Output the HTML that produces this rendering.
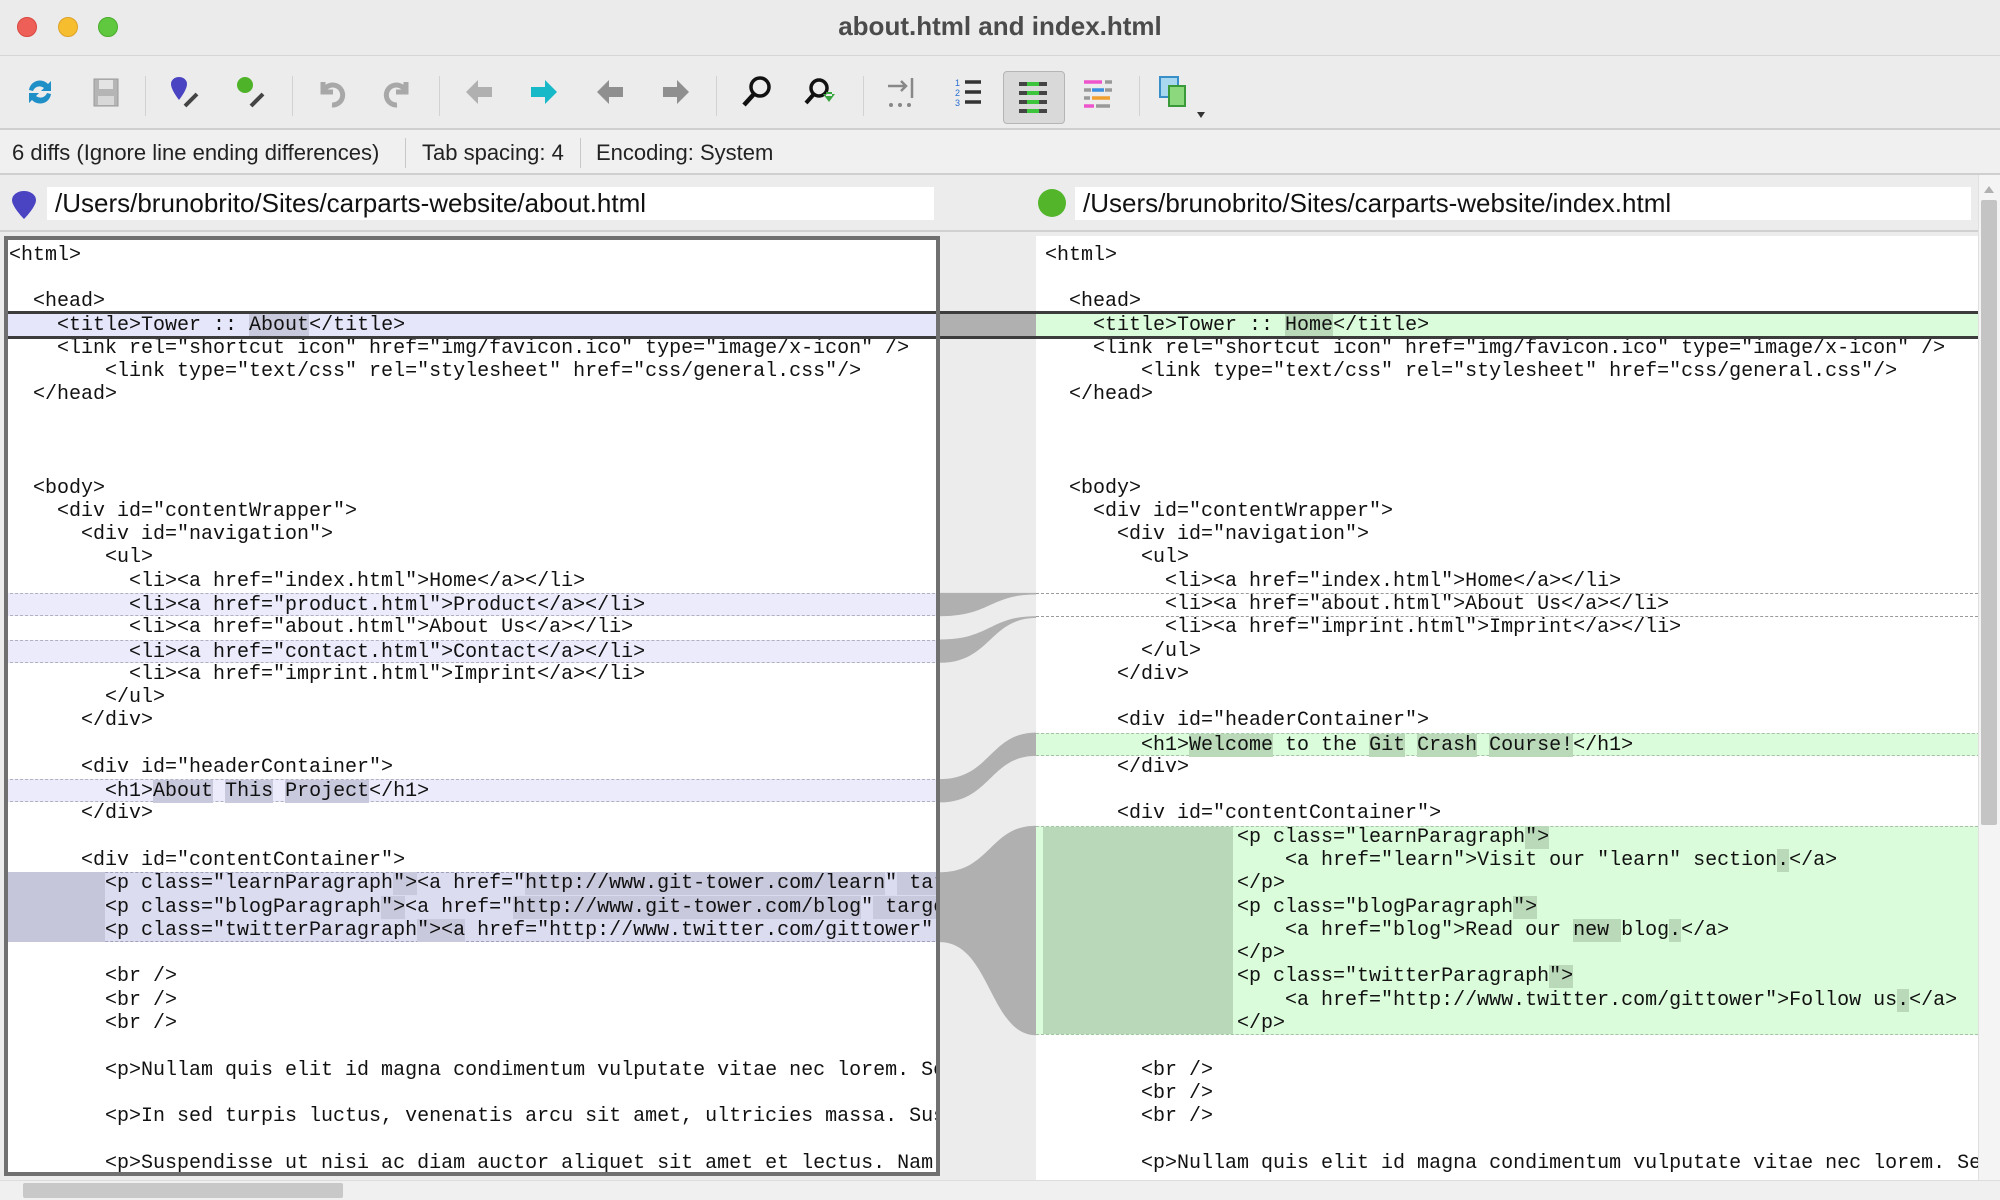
<!DOCTYPE html>
<html><head><meta charset="utf-8">
<style>
*{margin:0;padding:0;box-sizing:border-box}
body{width:2000px;height:1200px;background:#ececec;position:relative;overflow:hidden;font-family:"Liberation Sans",sans-serif}
.abs{position:absolute}
#title{left:0;top:0;width:2000px;height:56px;background:#ebebeb;border-bottom:1px solid #d6d6d6}
.tl{position:absolute;top:17px;width:20px;height:20px;border-radius:50%}
#ttext{position:absolute;left:0;width:2000px;top:11px;text-align:center;font-size:26px;font-weight:bold;color:#4b4b4b}
#toolbar{left:0;top:56px;width:2000px;height:74px;background:#ececec;border-bottom:2px solid #cfcfcf}
.sep{position:absolute;top:20px;width:1px;height:40px;background:#d2d2d2}
.ic{position:absolute;top:16px;width:40px;height:40px}
#status{left:0;top:130px;width:2000px;height:45px;background:#f0f0f0;border-bottom:2px solid #cfcfcf;font-size:22px;color:#222}
#status span{position:absolute;top:10px}
.vs{position:absolute;top:8px;width:1px;height:30px;background:#c8c8c8}
#pathbar{left:0;top:175px;width:1978px;height:57px;background:#ececec;border-bottom:2px solid #d0d0d0}
.field{position:absolute;top:12px;height:33px;background:#fff;font-size:26px;color:#111;padding-left:8px;line-height:33px;white-space:nowrap;overflow:hidden}
.pane{position:absolute;background:#fff;overflow:hidden}
.line{position:absolute;left:0;height:23.28px;width:100%;font-family:"Liberation Mono",monospace;font-size:20px;line-height:23.28px;white-space:pre;color:#111}
.lav{background:#ebebfb;border-top:1px dashed #b0b0c0;border-bottom:1px dashed #b0b0c0}
.grn{background:#dbfcdb;border-top:1px dashed #a8c0a8;border-bottom:1px dashed #a8c0a8}
.hl{background:#c9c9dd}
.hg{background:#b9d9b9}
.dash{position:absolute;height:0;border-top:1px dashed #9a9a9a}
</style></head><body>

<div id="title" class="abs">
 <div class="tl" style="left:17px;background:#ee5f57;border:1px solid #d8473f"></div>
 <div class="tl" style="left:58px;background:#f6bd2f;border:1px solid #dca22a"></div>
 <div class="tl" style="left:98px;background:#5fc83f;border:1px solid #4aac2c"></div>
 <div id="ttext">about.html and index.html</div>
</div>

<div id="toolbar" class="abs">
 <svg class="ic" style="left:20px" viewBox="0 0 40 40"><path d="M9 18a11 11 0 0 1 19-6l3-3v10h-10l3-3a7 7 0 0 0-11 3z" fill="#1e8fc7"/><path d="M31 22a11 11 0 0 1-19 6l-3 3V21h10l-3 3a7 7 0 0 0 11-3z" fill="#1e8fc7"/></svg>
 <svg class="ic" style="left:86px" viewBox="0 0 40 40"><rect x="8" y="7" width="24" height="27" fill="#b5b5b5" stroke="#9a9a9a"/><rect x="13" y="8" width="14" height="9" fill="#e4e4e4"/><rect x="12" y="24" width="16" height="9" fill="#d8d8d8"/></svg>
 <div class="sep" style="left:145px"></div>
 <svg class="ic" style="left:165px" viewBox="0 0 40 40"><path d="M6 12a8 7 0 0 1 16 0c0 6-8 16-8 16S6 18 6 12z" fill="#4a44c2"/><path d="M20 34l12-12" stroke="#444" stroke-width="4"/></svg>
 <svg class="ic" style="left:231px" viewBox="0 0 40 40"><circle cx="14" cy="13" r="8" fill="#4fb32a"/><path d="M20 34l12-12" stroke="#444" stroke-width="4"/></svg>
 <div class="sep" style="left:292px"></div>
 <svg class="ic" style="left:311px" viewBox="0 0 40 40"><path d="M12 10v10h10" fill="none" stroke="#a8a8a8" stroke-width="5"/><path d="M13 18a10 10 0 1 1 8 15" fill="none" stroke="#a8a8a8" stroke-width="5"/></svg>
 <svg class="ic" style="left:378px" viewBox="0 0 40 40"><path d="M28 10v10H18" fill="none" stroke="#a8a8a8" stroke-width="5"/><path d="M27 18a10 10 0 1 0-8 15" fill="none" stroke="#a8a8a8" stroke-width="5"/></svg>
 <div class="sep" style="left:439px"></div>
 <svg class="ic" style="left:460px" viewBox="0 0 40 40"><path d="M6 20l12-12v7h14v10H18v7z" fill="#b0b0b0"/></svg>
 <svg class="ic" style="left:523px" viewBox="0 0 40 40"><path d="M34 20L22 8v7H8v10h14v7z" fill="#17b9c9"/></svg>
 <svg class="ic" style="left:591px" viewBox="0 0 40 40"><path d="M6 20l12-12v7h14v10H18v7z" fill="#8f8f8f"/></svg>
 <svg class="ic" style="left:655px" viewBox="0 0 40 40"><path d="M34 20L22 8v7H8v10h14v7z" fill="#8f8f8f"/></svg>
 <div class="sep" style="left:716px"></div>
 <svg class="ic" style="left:737px" viewBox="0 0 40 40"><circle cx="23" cy="15" r="9" fill="none" stroke="#111" stroke-width="3.5"/><path d="M17 22L7 33" stroke="#111" stroke-width="4.5"/></svg>
 <svg class="ic" style="left:801px" viewBox="0 0 40 40"><circle cx="18" cy="16" r="8" fill="none" stroke="#111" stroke-width="3.5"/><path d="M13 22L5 31" stroke="#111" stroke-width="4"/><path d="M22 22l6 8 6-8z M25 20h6v4h-6z" fill="#3aa640"/></svg>
 <div class="sep" style="left:863px"></div>
 <svg class="ic" style="left:882px" viewBox="0 0 40 40"><path d="M6 14h18M19 9l5 5-5 5" fill="none" stroke="#888" stroke-width="2.5"/><path d="M30 6v20" stroke="#888" stroke-width="2.5"/><circle cx="9" cy="33" r="2" fill="#888"/><circle cx="18" cy="33" r="2" fill="#888"/><circle cx="27" cy="33" r="2" fill="#888"/></svg>
 <svg class="ic" style="left:948px" viewBox="0 0 40 40"><path d="M17 10h16M17 20h16M17 30h16" stroke="#333" stroke-width="3.5"/><text x="7" y="14" font-size="9" fill="#2a6fd0" font-family="Liberation Sans">1</text><text x="7" y="24" font-size="9" fill="#2a6fd0" font-family="Liberation Sans">2</text><text x="7" y="34" font-size="9" fill="#2a6fd0" font-family="Liberation Sans">3</text></svg>
 <div class="abs" style="left:1003px;top:15px;width:62px;height:53px;background:#d9d9d9;border:1px solid #b5b5b5;border-radius:4px"></div>
 <svg class="ic" style="left:1013px;top:20px" viewBox="0 0 40 40"><g stroke-width="4"><path d="M6 8h8M26 8h8M6 17h8M26 17h8M6 26h8M26 26h8M6 35h8M26 35h8" stroke="#444"/><path d="M14 8h12M14 17h12M14 26h12M14 35h12" stroke="#3cc43c"/></g></svg>
 <svg class="ic" style="left:1078px" viewBox="0 0 40 40"><g stroke-width="3.5"><path d="M6 10h18" stroke="#ee55cc"/><path d="M27 10h7" stroke="#999"/><path d="M6 18h7M27 18h7" stroke="#999"/><path d="M14 18h12" stroke="#3a8fe0"/><path d="M6 26h6" stroke="#999"/><path d="M14 26h18" stroke="#f0a030"/><path d="M6 34h10" stroke="#ee55cc"/><path d="M18 34h14" stroke="#999"/></g></svg>
 <div class="sep" style="left:1139px"></div>
 <svg class="ic" style="left:1155px" viewBox="0 0 40 40"><rect x="5" y="5" width="18" height="20" fill="#a8d8f0" stroke="#3a8fc8" stroke-width="2"/><rect x="14" y="14" width="16" height="20" fill="#8cd87c" stroke="#3a9a3a" stroke-width="2"/></svg>
 <svg class="abs" style="left:1196px;top:55px" width="10" height="8" viewBox="0 0 10 8"><path d="M1 1h8L5 7z" fill="#333"/></svg>
</div>

<div id="status" class="abs">
 <span style="left:12px">6 diffs (Ignore line ending differences)</span>
 <div class="vs" style="left:405px"></div>
 <span style="left:422px">Tab spacing: 4</span>
 <div class="vs" style="left:580px"></div>
 <span style="left:596px">Encoding: System</span>
</div>

<div id="pathbar" class="abs">
 <svg class="abs" style="left:10px;top:16px" width="28" height="30" viewBox="0 0 28 30"><path d="M2 9a12 9 0 0 1 24 0c0 7-12 19-12 19S2 16 2 9z" fill="#4a44c2"/></svg>
 <div class="field" style="left:47px;width:887px">/Users/brunobrito/Sites/carparts-website/about.html</div>
 <div class="abs" style="left:1038px;top:14px;width:28px;height:28px;border-radius:50%;background:#52b52a"></div>
 <div class="field" style="left:1075px;width:896px">/Users/brunobrito/Sites/carparts-website/index.html</div>
</div>

<div class="abs" style="left:1978px;top:175px;width:22px;height:1005px;background:#f4f4f4;border-left:1px solid #e0e0e0"></div>
<div class="abs" style="left:1984px;top:186px;width:0;height:0;border-left:5px solid transparent;border-right:5px solid transparent;border-bottom:7px solid #b0b0b0"></div>
<div class="abs" style="left:1981px;top:200px;width:16px;height:625px;background:#c4c4c4;border-radius:2px"></div>
<div class="abs" style="left:0;top:1180px;width:2000px;height:20px;background:#f0f0f0;border-top:1px solid #ddd"></div>
<div class="abs" style="left:23px;top:1183px;width:320px;height:15px;background:#c8c8c8;border-radius:2px"></div>

<div class="abs" style="left:8px;top:240px;width:928px;height:932px;overflow:hidden;background:#fff">
 <div style="position:absolute;left:-8px;top:-240px;width:940px;height:1200px">
  <div class="line" style="top:243.7px;left:9px">&lt;html&gt;</div>
  <div class="line" style="top:290.3px;left:9px">  &lt;head&gt;</div>
  <div class="line" style="top:313.5px;left:0;background:#e6e6fa;padding-left:9px">    &lt;title&gt;Tower :: <span class="hl">About</span>&lt;/title&gt;</div>
  <div class="line" style="top:336.8px;left:9px">    &lt;link rel="shortcut icon" href="img/favicon.ico" type="image/x-icon" /&gt;</div>
  <div class="line" style="top:360.1px;left:9px">        &lt;link type="text/css" rel="stylesheet" href="css/general.css"/&gt;</div>
  <div class="line" style="top:383.4px;left:9px">  &lt;/head&gt;</div>
  <div class="line" style="top:476.5px;left:9px">  &lt;body&gt;</div>
  <div class="line" style="top:499.8px;left:9px">    &lt;div id="contentWrapper"&gt;</div>
  <div class="line" style="top:523.1px;left:9px">      &lt;div id="navigation"&gt;</div>
  <div class="line" style="top:546.3px;left:9px">        &lt;ul&gt;</div>
  <div class="line" style="top:569.6px;left:9px">          &lt;li&gt;&lt;a href="index.html"&gt;Home&lt;/a&gt;&lt;/li&gt;</div>
  <div class="line lav" style="top:592.9px;padding-left:9px">          &lt;li&gt;&lt;a href="product.html"&gt;Product&lt;/a&gt;&lt;/li&gt;</div>
  <div class="line" style="top:616.2px;left:9px">          &lt;li&gt;&lt;a href="about.html"&gt;About Us&lt;/a&gt;&lt;/li&gt;</div>
  <div class="line lav" style="top:639.5px;padding-left:9px">          &lt;li&gt;&lt;a href="contact.html"&gt;Contact&lt;/a&gt;&lt;/li&gt;</div>
  <div class="line" style="top:662.8px;left:9px">          &lt;li&gt;&lt;a href="imprint.html"&gt;Imprint&lt;/a&gt;&lt;/li&gt;</div>
  <div class="line" style="top:686.1px;left:9px">        &lt;/ul&gt;</div>
  <div class="line" style="top:709.4px;left:9px">      &lt;/div&gt;</div>
  <div class="line" style="top:755.9px;left:9px">      &lt;div id="headerContainer"&gt;</div>
  <div class="line lav" style="top:779.1px;padding-left:9px">        &lt;h1&gt;<span class="hl">About</span> <span class="hl">This</span> <span class="hl">Project</span>&lt;/h1&gt;</div>
  <div class="line" style="top:802.4px;left:9px">      &lt;/div&gt;</div>
  <div class="line" style="top:849px;left:9px">      &lt;div id="contentContainer"&gt;</div>
  <div class="abs" style="left:0;top:872.3px;width:940px;height:69.8px;background:#dcdcf0;border-top:1px dashed #a0a0b8;border-bottom:1px dashed #a0a0b8"></div>
  <div class="abs" style="left:0;top:872.3px;width:105px;height:69.8px;background:#c6c6da"></div>
  <div class="line" style="top:872.3px;left:9px">        &lt;p class="learnParagraph<span class="hl">"&gt;</span>&lt;a href="<span class="hl">http://www.git-tower.com/learn</span>"<span class="hl"> target="_blank"</span></div>
  <div class="line" style="top:895.6px;left:9px">        &lt;p class="blogParagraph<span class="hl">"&gt;</span>&lt;a href="<span class="hl">http://www.git-tower.com/blog</span>"<span class="hl"> target="_blank"</span></div>
  <div class="line" style="top:918.9px;left:9px">        &lt;p class="twitterParagraph<span class="hl">"&gt;&lt;a</span> href="http://www.twitter.com/gittower" target</div>
  <div class="line" style="top:965.4px;left:9px">        &lt;br /&gt;</div>
  <div class="line" style="top:988.7px;left:9px">        &lt;br /&gt;</div>
  <div class="line" style="top:1012px;left:9px">        &lt;br /&gt;</div>
  <div class="line" style="top:1058.6px;left:9px">        &lt;p&gt;Nullam quis elit id magna condimentum vulputate vitae nec lorem. Sed</div>
  <div class="line" style="top:1105.1px;left:9px">        &lt;p&gt;In sed turpis luctus, venenatis arcu sit amet, ultricies massa. Susp</div>
  <div class="line" style="top:1151.7px;left:9px">        &lt;p&gt;Suspendisse ut nisi ac diam auctor aliquet sit amet et lectus. Nam</div>
 </div>
</div>

<div class="pane" style="left:1036px;top:236px;width:942px;height:944px">
 <div style="position:absolute;left:-1036px;top:-236px;width:2000px;height:1200px">
  <div class="line" style="top:243.7px;left:1045px">&lt;html&gt;</div>
  <div class="line" style="top:290.3px;left:1045px">  &lt;head&gt;</div>
  <div class="line" style="top:313.5px;left:1036px;background:#dbfcdb;padding-left:9px">    &lt;title&gt;Tower :: <span class="hg">Home</span>&lt;/title&gt;</div>
  <div class="line" style="top:336.8px;left:1045px">    &lt;link rel="shortcut icon" href="img/favicon.ico" type="image/x-icon" /&gt;</div>
  <div class="line" style="top:360.1px;left:1045px">        &lt;link type="text/css" rel="stylesheet" href="css/general.css"/&gt;</div>
  <div class="line" style="top:383.4px;left:1045px">  &lt;/head&gt;</div>
  <div class="line" style="top:476.5px;left:1045px">  &lt;body&gt;</div>
  <div class="line" style="top:499.8px;left:1045px">    &lt;div id="contentWrapper"&gt;</div>
  <div class="line" style="top:523.1px;left:1045px">      &lt;div id="navigation"&gt;</div>
  <div class="line" style="top:546.3px;left:1045px">        &lt;ul&gt;</div>
  <div class="line" style="top:569.6px;left:1045px">          &lt;li&gt;&lt;a href="index.html"&gt;Home&lt;/a&gt;&lt;/li&gt;</div>
  <div class="dash" style="top:592.9px;left:1036px;width:942px"></div>
  <div class="line" style="top:592.9px;left:1045px">          &lt;li&gt;&lt;a href="about.html"&gt;About Us&lt;/a&gt;&lt;/li&gt;</div>
  <div class="dash" style="top:616.2px;left:1036px;width:942px"></div>
  <div class="line" style="top:616.2px;left:1045px">          &lt;li&gt;&lt;a href="imprint.html"&gt;Imprint&lt;/a&gt;&lt;/li&gt;</div>
  <div class="line" style="top:639.5px;left:1045px">        &lt;/ul&gt;</div>
  <div class="line" style="top:662.8px;left:1045px">      &lt;/div&gt;</div>
  <div class="line" style="top:709.4px;left:1045px">      &lt;div id="headerContainer"&gt;</div>
  <div class="line grn" style="top:732.6px;left:1036px;padding-left:9px">        &lt;h1&gt;<span class="hg">Welcome</span> to the <span class="hg">Git</span> <span class="hg">Crash</span> <span class="hg">Course!</span>&lt;/h1&gt;</div>
  <div class="line" style="top:755.9px;left:1045px">      &lt;/div&gt;</div>
  <div class="line" style="top:802.4px;left:1045px">      &lt;div id="contentContainer"&gt;</div>
  <div class="abs" style="left:1036px;top:825.7px;width:942px;height:209.5px;background:#dbfcdb;border-top:1px dashed #a8c0a8;border-bottom:1px dashed #a8c0a8"></div>
  <div class="abs" style="left:1043px;top:826.7px;width:190px;height:207.5px;background:#b9d7b9"></div>
  <div class="line" style="top:825.7px;left:1045px">                &lt;p class="learnParagraph<span class="hg">"&gt;</span></div>
  <div class="line" style="top:849px;left:1045px">                    &lt;a href="learn"&gt;Visit our "learn" section<span class="hg">.</span>&lt;/a&gt;</div>
  <div class="line" style="top:872.3px;left:1045px">                &lt;/p&gt;</div>
  <div class="line" style="top:895.6px;left:1045px">                &lt;p class="blogParagraph<span class="hg">"&gt;</span></div>
  <div class="line" style="top:918.9px;left:1045px">                    &lt;a href="blog"&gt;Read our <span class="hg">new </span>blog<span class="hg">.</span>&lt;/a&gt;</div>
  <div class="line" style="top:942.1px;left:1045px">                &lt;/p&gt;</div>
  <div class="line" style="top:965.4px;left:1045px">                &lt;p class="twitterParagraph<span class="hg">"&gt;</span></div>
  <div class="line" style="top:988.7px;left:1045px">                    &lt;a href="http://www.twitter.com/gittower"&gt;Follow us<span class="hg">.</span>&lt;/a&gt;</div>
  <div class="line" style="top:1012px;left:1045px">                &lt;/p&gt;</div>
  <div class="line" style="top:1058.6px;left:1045px">        &lt;br /&gt;</div>
  <div class="line" style="top:1081.8px;left:1045px">        &lt;br /&gt;</div>
  <div class="line" style="top:1105.1px;left:1045px">        &lt;br /&gt;</div>
  <div class="line" style="top:1151.7px;left:1045px">        &lt;p&gt;Nullam quis elit id magna condimentum vulputate vitae nec lorem. Sed</div>
 </div>
</div>

<svg class="abs" style="left:0;top:0" width="2000" height="1200" viewBox="0 0 2000 1200">
 <rect x="940" y="313.5" width="96" height="23.3" fill="#b0b0b0"/>
 <path d="M940 592.9C990 592.9 990 592.9 1036 592.9L1036 594.5C990 594.5 990 616.2 940 616.2Z" fill="#b0b0b0"/>
 <path d="M940 639.5C990 639.5 990 616.2 1036 616.2L1036 618C990 618 990 662.8 940 662.8Z" fill="#b0b0b0"/>
 <path d="M940 779.1C990 779.1 990 732.6 1036 732.6L1036 755.9C990 755.9 990 802.4 940 802.4Z" fill="#b0b0b0"/>
 <path d="M940 872.3C990 872.3 990 825.7 1036 825.7L1036 1035.2C990 1035.2 990 942.1 940 942.1Z" fill="#b0b0b0"/>
 <rect x="8" y="311" width="1970" height="3" fill="#3c3c3c"/>
 <rect x="8" y="336" width="1970" height="3" fill="#3c3c3c"/>
</svg>
<div class="abs" style="left:4px;top:236px;width:936px;height:940px;border:4px solid #707070;pointer-events:none"></div>
</body></html>
